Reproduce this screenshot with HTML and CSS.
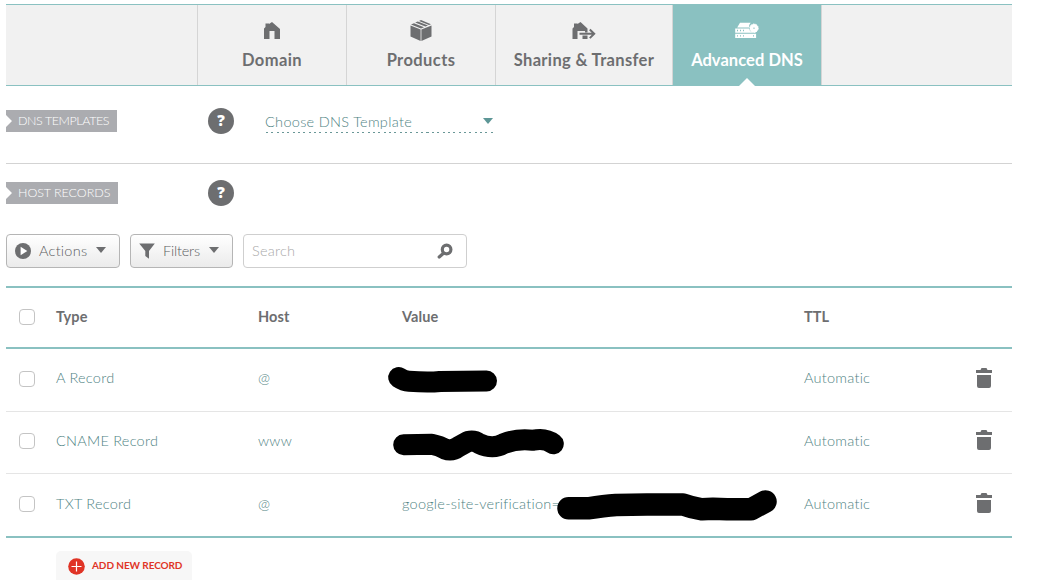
FILE: index.html
```html
<!DOCTYPE html>
<html lang="en">
<head>
<meta charset="utf-8">
<title>Advanced DNS</title>
<link rel="stylesheet" href="styles.css">
</head>
<body>
<main class="page">
  <nav class="tabs">
    <a class="tab">
      <svg class="tab-icon" width="24" height="24" viewBox="0 0 24 24"><path d="M4 21V10.500L5.500 9V5.500H9V6L12 4l8 7v10h-5.500v-8H9.500v8z"/></svg>
      <span class="tab-text">Domain</span>
    </a>
    <a class="tab">
      <svg class="tab-icon" width="24" height="24" viewBox="0 0 24 24"><path d="M1.500 7.500 11.600 11.400V23L1.500 18.600zM22.500 7.500 12.400 11.400V23l10.100-4.400zM2 6.500l3-1.300 10 4-3 1.400zM6.200 4.600l2.600-1.100L19 7.500l-2.600 1.100zM10 3 12 2.100l10 4.200-2 .7z"/></svg>
      <span class="tab-text">Products</span>
    </a>
    <a class="tab tab-wide">
      <svg class="tab-icon" width="24" height="24" viewBox="0 0 24 24"><path d="M.5 21V10.500L2 9V5.500h3.500V6L8.500 4l7 6.500v4H13V13H5.500v8zM10.500 17.500h5V21h-5z"/><path class="arrow" d="M7.500 15.800H22M17.800 11.500l4.400 4.300-4.400 4.300"/></svg>
      <span class="tab-text t-sharing">Sharing &amp; Transfer</span>
    </a>
    <a class="tab tab-active">
      <svg class="tab-icon" width="24" height="24" viewBox="0 0 24 24"><path d="M5 4.800h10.700a5 5 0 0 0-1.500 4.700H2.200zM.2 10.500h13.800a5 5 0 0 0 4 3.900h3v.3H.2zM.2 15.700h20.900V20H.2z"/><circle cx="19" cy="10.200" r="4.200"/><circle class="cog" cx="19" cy="10.200" r="4.200"/><path class="leds" d="M2 12.500h1M5 12.500h1M8 12.500h1M2 17.900h1M5 17.900h1M8 17.900h1M18 17.900h1M18.500 10.200h1"/></svg>
      <span class="tab-text t-dns">Advanced DNS</span>
    </a>
  </nav>

  <section class="section templates">
    <div class="label-col"><h2 class="ribbon">DNS TEMPLATES</h2></div>
    <span class="help">?</span>
    <div class="select"><span>Choose DNS Template</span><i class="caret"></i></div>
  </section>

  <section class="section hosts">
    <div class="label-col"><h2 class="ribbon ribbon-hosts">HOST RECORDS</h2></div>
    <span class="help">?</span>
  </section>

  <div class="toolbar">
    <button class="btn btn-actions">
      <svg width="16" height="16" viewBox="0 0 16 16"><circle cx="8" cy="8" r="8"/><path class="play" d="M5.600 3.800v8.400L12.300 8z"/></svg>
      <span>Actions</span><i class="caret"></i>
    </button>
    <button class="btn btn-filters">
      <svg width="16" height="16" viewBox="0 0 16 16"><path d="M.2.500h15.600L10 8v7.800L6.300 13V8z"/></svg>
      <span>Filters</span><i class="caret"></i>
    </button>
    <div class="search">
      <span>Search</span>
      <svg width="16" height="16" viewBox="0 0 16 16"><circle class="lens" cx="9.600" cy="6.500" r="4.300"/><path class="handle" d="M6.200 10.500 2.200 14"/></svg>
    </div>
  </div>

  <div class="table">
    <div class="row head">
      <i class="check"></i><span>Type</span><span>Host</span><span>Value</span><span>TTL</span>
    </div>
    <div class="row">
      <i class="check"></i><span>A Record</span><span>@</span>
      <span class="value"><svg class="mark" width="400" height="62" viewBox="402 349 400 62"><path d="M398.700 377.500Q404 381 409 381.300Q428 382.800 440 381.500L486.500 380.900"/></svg></span>
      <span>Automatic</span>
      <svg class="trash" width="16" height="20" viewBox="0 0 16 20"><path d="M0 2h4.500L5.500 0h5l1 2H16v3H0zM1 7h14v11q0 2-2 2H3q-2 0-2-2z"/></svg>
    </div>
    <div class="row">
      <i class="check"></i><span>CNAME Record</span><span>www</span>
      <span class="value"><svg class="mark" width="400" height="61" viewBox="402 414 400 61"><path d="M403.700 444.800L431.700 444.300Q440 446 445 449Q452 451.500 458 447L468 441.500Q474 440 479 443.500Q493 450 504 443.500Q517 438.500 533 440.300Q545 437.500 553.300 443.800"/></svg></span>
      <span>Automatic</span>
      <svg class="trash" width="16" height="20" viewBox="0 0 16 20"><path d="M0 2h4.500L5.500 0h5l1 2H16v3H0zM1 7h14v11q0 2-2 2H3q-2 0-2-2z"/></svg>
    </div>
    <div class="row">
      <i class="check"></i><span>TXT Record</span><span>@</span>
      <span class="value"><span>google-site-verification=</span><svg class="mark mark-thick" width="400" height="62" viewBox="402 477 400 62"><path d="M568.500 508.300H588Q604 506 616 505L647 504.600H683Q692 508 702 509.300L713 508.700 727 509.300H751L765.500 501.500"/></svg></span>
      <span>Automatic</span>
      <svg class="trash" width="16" height="20" viewBox="0 0 16 20"><path d="M0 2h4.500L5.500 0h5l1 2H16v3H0zM1 7h14v11q0 2-2 2H3q-2 0-2-2z"/></svg>
    </div>
  </div>

  <button class="add">
    <svg width="17" height="17" viewBox="0 0 17 17"><circle cx="8.500" cy="8.500" r="8.300"/><path d="M8.500 3.500v10M3.500 8.500h10"/></svg>
    <span>ADD NEW RECORD</span>
  </button>
</main>
</body>
</html>
```

FILE: styles.css
```css
* { box-sizing: border-box; }
body {
  margin: 0;
  height: 580px;
  overflow: hidden;
  background: #fff;
  color: #5c5d5f;
  font: 300 14.5px/20px Lato, "Open Sans", sans-serif;
  letter-spacing: .25px;
}
.page { width: 1006px; margin-left: 6px; padding-top: 4px; }
svg { display: block; fill: #6d6e70; flex: none; }

.tabs {
  display: flex;
  height: 82px;
  padding-left: 191px;
  background: #f1f1f1;
  border-top: 1px solid #8ac1c1;
  border-bottom: 1px solid #8ac1c1;
  color: #6d6e70;
}
.tab {
  display: flex;
  flex-direction: column;
  align-items: center;
  width: 149px;
  padding-top: 13px;
  border-left: 1px solid #d5d5d5;
}
.tab-wide { width: 177px; }
.tab-active {
  position: relative;
  width: 150px;
  color: #fff;
  background: #8ac1c1;
  border-right: 1px solid #d5d5d5;
}
.tab-active::after {
  content: "";
  position: absolute;
  bottom: -1px;
  left: 66px;
  border: 8px solid transparent;
  border-top: 0;
  border-bottom-color: #fff;
}
.tab-active .tab-icon { fill: #fff; }
.tab-text { margin-top: 8px; font-size: 16.5px; font-weight: 700; letter-spacing: .4px; white-space: nowrap; }
.t-sharing { letter-spacing: .35px; }
.t-dns { letter-spacing: .05px; }
.arrow { fill: none; stroke: #6d6e70; stroke-width: 2; }
.cog { fill: none; stroke: #fff; stroke-width: 1; stroke-dasharray: 1.6 1; }
.leds { stroke: #8ac1c1; stroke-width: 1.4; }

.section { display: flex; align-items: center; }
.templates { height: 78px; padding-bottom: 7px; border-bottom: 1px solid #d3d3d3; }
.hosts { height: 58px; }
.label-col { width: 202px; }
.ribbon {
  width: 111px;
  height: 22px;
  margin: 0;
  padding-left: 12px;
  color: #fff;
  background: #abacb0;
  clip-path: polygon(0 0, 100% 0, 100% 100%, 0 100%, 0 77%, 6px 50%, 0 23%);
  font: 300 12.500px/22px Lato, sans-serif;
  letter-spacing: -.42px;
  white-space: nowrap;
}
.ribbon-hosts { width: 112px; letter-spacing: -.05px; }
.help {
  width: 26px;
  height: 26px;
  border-radius: 50%;
  background: #6d6e70;
  color: #fff;
  font: 800 15px/25px "Open Sans", sans-serif;
  letter-spacing: 0;
  text-align: center;
}
.select {
  display: flex;
  align-items: center;
  justify-content: space-between;
  width: 228px;
  height: 24px;
  margin-left: 31px;
  color: #4f8383;
  background: repeating-linear-gradient(90deg, transparent 0 1px, #699797 1px 3px, transparent 3px 5.350px) bottom / 100% 1px no-repeat;
}
.select span { padding-top: 1px; letter-spacing: .3px; }
.caret { width: 10px; height: 5px; background: #6d6e70; clip-path: polygon(0 0, 100% 0, 50% 100%); }
.select .caret { height: 6px; background: #5d9696; }

.toolbar { display: flex; height: 64px; padding-top: 12px; gap: 10px; }
.btn {
  display: flex;
  align-items: center;
  height: 34px;
  padding: 0 0 0 8px;
  border: 1px solid #b5b5b5;
  border-radius: 4px;
  background: linear-gradient(#fff, #ebebeb);
  color: #5c5d5f;
  font: inherit;
  letter-spacing: inherit;
}
.btn span { width: 49px; margin-left: 8px; text-align: left; }
.btn .caret { height: 6px; margin: 0 0 2px 8px; }
.btn-actions { width: 114px; }
.btn-filters { width: 103px; }
.btn-filters span { width: 38px; letter-spacing: -.2px; }
.play { fill: #fff; }
.search {
  display: flex;
  align-items: center;
  justify-content: space-between;
  width: 224px;
  height: 34px;
  padding: 0 13px 0 8px;
  border: 1px solid #cfcfcf;
  border-radius: 4px;
  color: #a9a9a9;
}
.lens { fill: none; stroke: #6d6e70; stroke-width: 3.200; }
.handle { stroke: #6d6e70; stroke-width: 3.200; stroke-linecap: round; }

.table { border-top: 2px solid #8ac1c1; border-bottom: 2px solid #8ac1c1; }
.row {
  display: grid;
  grid-template-columns: 37px 202px 144px 402px 172px 16px;
  align-items: center;
  height: 63px;
  padding: 0 0 4px 13px;
  border-bottom: 1px solid #e5e5e5;
  color: #4f8383;
}
.row:nth-child(3) { height: 62px; padding-bottom: 6px; }
.row:nth-child(3) > span { margin-top: 2px; }
.row:nth-child(4) > span { margin-top: 3px; }
.row:last-child { height: 62px; border-bottom: 0; padding-bottom: 5px; }
.head { height: 61px; border-bottom: 2px solid #8ac1c1; color: #6d6e70; font-weight: 700; letter-spacing: .1px; }
.head > span { padding-top: 2px; }
.check { width: 16px; height: 16px; margin-top: 2px; border: 1px solid #c4c4c4; border-radius: 4px; background: #fff; }
.value { position: relative; align-self: stretch; display: flex; align-items: center; }
.mark {
  position: absolute;
  left: 0;
  top: 0;
  overflow: visible;
  fill: none;
  stroke: #000;
  stroke-width: 21px;
  stroke-linecap: round;
  stroke-linejoin: round;
}
.mark-thick { stroke-width: 22.500px; }

.add {
  display: flex;
  align-items: center;
  gap: 7px;
  width: 136px;
  height: 40px;
  margin: 13px 0 0 50px;
  padding: 0 0 10px 12px;
  border: 0;
  border-radius: 5px;
  background: #f7f7f7;
  color: #e03426;
  font: 700 10px/16px Lato, sans-serif;
  letter-spacing: -.08px;
  white-space: nowrap;
}
.add svg { fill: #e03426; stroke: #fff; stroke-width: 1.200; }
.add circle { stroke: none; }
.add span { margin-top: -2px; }
```
